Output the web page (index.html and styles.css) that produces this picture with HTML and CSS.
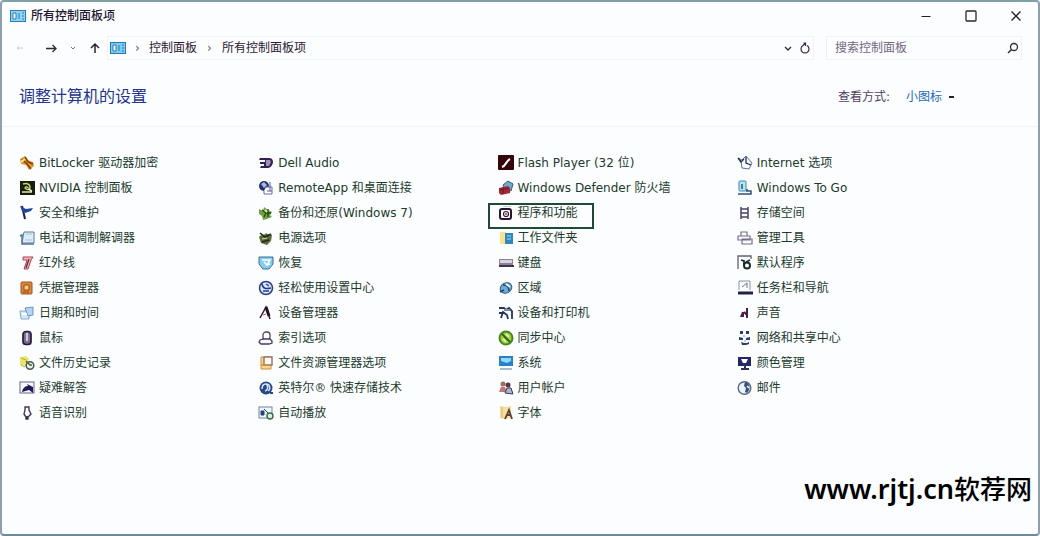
FILE: index.html
```html
<!DOCTYPE html>
<html lang="zh-CN">
<head>
<meta charset="UTF-8">
<meta name="viewport" content="width=device-width, initial-scale=1.0">
<title>所有控制面板项</title>
<link rel="stylesheet" href="styles.css">
</head>
<body>
    <div class="window">
        <header class="titlebar">
            <svg class="icon" viewBox="0 0 16 16"><rect x=".5" y="2.5" width="15" height="11" fill="#8fd4f7" stroke="#287fb5"/><path d="M3 5h3v6H3zM9 5v6M12 5h2M12 8h2M12 11h2" fill="#fff" stroke="#2c78ad"/></svg>
            <h1>所有控制面板项</h1>
            <div class="window-buttons">
                <button aria-label="最小化"><svg class="small" viewBox="0 0 12 12"><path d="M1.500 6.500h9" stroke="#222"/></svg></button>
                <button aria-label="最大化"><svg class="small" viewBox="0 0 12 12"><rect x="1" y="1" width="10" height="10" rx="1" fill="none" stroke="#2a2530" stroke-width="1.300"/></svg></button>
                <button aria-label="关闭"><svg class="small" viewBox="0 0 12 12"><path d="M1.500 1.500l9 9M10.500 1.500l-9 9" stroke="#222" stroke-width="1.300"/></svg></button>
            </div>
        </header>

        <div class="toolbar">
            <nav class="nav-buttons">
                <button aria-label="后退" disabled><svg class="small" viewBox="0 0 12 12"><path d="M9 6H3M5 4L3 6l2 2" fill="none" stroke="#c9cdd2"/></svg></button>
                <button aria-label="前进"><svg class="small" viewBox="0 0 12 12"><path d="M1 6.500h10M7.500 3L11 6.500 7.500 10" fill="none" stroke="#2b2b33" stroke-width="1.300"/></svg></button>
                <button class="recent" aria-label="最近位置"><svg class="small" viewBox="0 0 12 12"><path d="M4 5l2 2 2-2" fill="none" stroke="#777"/></svg></button>
                <button aria-label="向上"><svg class="small" viewBox="0 0 12 12"><path d="M6 11V2M2 6l4-4 4 4" fill="none" stroke="#2b2038" stroke-width="1.500"/></svg></button>
            </nav>
            <div class="address">
                <svg class="icon" viewBox="0 0 16 16"><rect x=".5" y="2.500" width="15" height="11" fill="#7ccbf5" stroke="#247bb2"/><path d="M3 5h3v6H3zM9 5v6M12 5h2M12 8h2M12 11h2" fill="#fff" stroke="#2c78ad"/></svg>
                <span class="sep">›</span>
                <a href="#">控制面板</a>
                <span class="sep wide">›</span>
                <a href="#">所有控制面板项</a>
                <div class="address-end">
                    <button aria-label="以前的位置"><svg class="small" viewBox="0 0 12 12"><path d="M3 5l3 3 3-3" fill="none" stroke="#332b3b" stroke-width="1.400"/></svg></button>
                    <button aria-label="刷新"><svg class="small" viewBox="0 0 12 12"><path d="M8 3.500a4 4 0 1 1-4 0L6 1.500M4.500 1h2v3" fill="none" stroke="#3b2848" stroke-width="1.200"/></svg></button>
                </div>
            </div>
            <div class="search">
                <input type="text" placeholder="搜索控制面板" aria-label="搜索控制面板">
                <svg class="small" viewBox="0 0 12 12"><circle cx="7" cy="5" r="3.500" fill="none" stroke="#33273d" stroke-width="1.300"/><path d="M4.500 7.500L1 11" stroke="#33273d" stroke-width="1.500"/></svg>
            </div>
        </div>

        <main>
            <div class="heading">
                <h2>调整计算机的设置</h2>
                <div class="view">
                    <label for="view">查看方式:</label>
                    <select id="view"><option>小图标</option><option>大图标</option><option>类别</option></select>
                </div>
            </div>

            <ul class="items">
                <li><a href="#"><svg class="icon" viewBox="0 0 16 16"><path d="M1 4l5-3 3 4 5 2 1 4-5 4-3-5-5-1z" fill="#d89a2b"/><path d="M3 4l5 5 4 5M6 2l3 5 5 2" fill="none" stroke="#8b3c17" stroke-width="1.500"/><path d="M2 7l4-3" stroke="#ffe784" stroke-width="2"/></svg>BitLocker 驱动器加密</a></li>
                <li><a href="#"><svg class="icon" viewBox="0 0 16 16"><path d="M2 3h9c3 0 4 2 4 4s-2 6-5 6H2l1-2h3V9H2V7h5V5H1z" fill="#352052"/><path d="M8 5h4l1 2-2 4H8z" fill="#9a92b4"/></svg>Dell Audio</a></li>
                <li><a href="#"><svg class="icon" viewBox="0 0 16 16"><rect width="16" height="15" rx="1" fill="#35050b"/><path d="M4 12c4-1 4-6 8-8" fill="none" stroke="#fff" stroke-width="2"/></svg>Flash Player (32 位)</a></li>
                <li><a href="#"><svg class="icon" viewBox="0 0 16 16"><path d="M1 3l4 2 4-4 6 7-3 6-7-1-1-7z" fill="#f5faff" stroke="#5d7295"/><path d="M1 3l3 4 3-3M9 2v6l5 2" fill="none" stroke="#252a56" stroke-width="1.300"/></svg>Internet 选项</a></li>

                <li><a href="#"><svg class="icon" viewBox="0 0 16 16"><rect x="1" y="1" width="15" height="14" fill="#181d12"/><path d="M4 4c4-1 7 0 7 3s-3 3-5 1c1-2 3-1 3 0" fill="none" stroke="#c6d36a" stroke-width="1.500"/><path d="M3 12h10M9 9l4 2" stroke="#dfe6ba" stroke-width="1.500"/></svg>NVIDIA 控制面板</a></li>
                <li><a href="#"><svg class="icon" viewBox="0 0 16 16"><circle cx="6" cy="6" r="5" fill="#26306f"/><path d="M3 4l3-2 3 3-3 3z" fill="#a9bce0"/><path d="M8 7h6v7H6v-3" fill="#fff" stroke="#706ba5"/><path d="M12 2v9M9 11h5" stroke="#5b5898"/></svg>RemoteApp 和桌面连接</a></li>
                <li><a href="#"><svg class="icon" viewBox="0 0 16 16"><path d="M5 5l5-4 5 3-2 7-6-2z" fill="#70a9c7" stroke="#3d5675"/><path d="M1 8l9-2 2 2v5l-9 2-2-2z" fill="#a52735"/><path d="M2 10l9-2M5 7v7" stroke="#5c1e36"/></svg>Windows Defender 防火墙</a></li>
                <li><a href="#"><svg class="icon" viewBox="0 0 16 16"><rect x="2" y="1" width="7" height="10" rx="1" fill="#b8e5f7" stroke="#3987ad"/><path d="M1 14h13v-3H9M5 4v5M10 11V9" fill="none" stroke="#30527a" stroke-width="1.500"/></svg>Windows To Go</a></li>

                <li><a href="#"><svg class="icon" viewBox="0 0 16 16"><path d="M3 1l3 13" stroke="#161e5b" stroke-width="2"/><path d="M1 1l6 3 7-1-2 3-6 2-3-2z" fill="#26469d"/></svg>安全和维护</a></li>
                <li><a href="#"><svg class="icon" viewBox="0 0 16 16"><path d="M1 4l4 2 1-4 4 3 4 2-2 3 2 2-5 2-4 1-1-4-3-2z" fill="#6da047"/><path d="M4 5l4 3-2 4M10 4v8M8 8h5" fill="none" stroke="#234519" stroke-width="1.300"/><path d="M7 5l2 2" stroke="#e1ee8b" stroke-width="2"/></svg>备份和还原(Windows 7)</a></li>
                <li class="marked"><a href="#"><svg class="icon" viewBox="0 0 16 16"><rect x="2" y="4" width="11" height="10" rx="2" fill="#fff" stroke="#29152f" stroke-width="2"/><circle cx="8" cy="9" r="2.500" fill="#fff" stroke="#2e1833" stroke-width="1.200"/><circle cx="8" cy="9" r="1" fill="#a63252"/><path d="M5 1.500h8" stroke="#d4c6d4"/></svg>程序和功能</a></li>
                <li><a href="#"><svg class="icon" viewBox="0 0 16 16"><path d="M4 2v12M11 2v12M4 4h7M4 8h7M4 12h7" fill="none" stroke="#4e4369" stroke-width="1.500"/></svg>存储空间</a></li>

                <li><a href="#"><svg class="icon" viewBox="0 0 16 16"><path d="M5 2h10v11H3z" fill="#d9edf8" stroke="#5b7d9b"/><path d="M1 6l2-1v9h12" fill="none" stroke="#596f96" stroke-width="1.500"/><path d="M7 4h6M6 10h7" stroke="#a9c3d9"/></svg>电话和调制解调器</a></li>
                <li><a href="#"><svg class="icon" viewBox="0 0 16 16"><path d="M1 7c2-3 5-1 7-4 2 2 4 1 6 2l-1 6-4 4-6-2z" fill="#596b3c"/><path d="M2 3l5 4 6-3M4 12l7-2" fill="none" stroke="#1f2916" stroke-width="1.600"/><path d="M4 9l5-1" stroke="#d3d9a3"/></svg>电源选项</a></li>
                <li><a href="#"><svg class="icon" viewBox="0 0 16 16"><path d="M2 2h6v12H2z" fill="#f9e290"/><rect x="7" y="3" width="8" height="11" fill="#3187be"/><path d="M9 6h4M9 9h4" stroke="#a9daf4"/></svg>工作文件夹</a></li>
                <li><a href="#"><svg class="icon" viewBox="0 0 16 16"><path d="M4 6V2h6v4M1 6h12v4H1zM5 9h10v5H5z" fill="#fafbff" stroke="#776f8a" stroke-width="1.200"/></svg>管理工具</a></li>

                <li><a href="#"><svg class="icon" viewBox="0 0 16 16"><path d="M4 2h10l-2 3-3 9H5l3-9H4z" fill="#f2b9bb" stroke="#a8414f"/><path d="M10 4L7 13" stroke="#622637" stroke-width="1.300"/></svg>红外线</a></li>
                <li><a href="#"><svg class="icon" viewBox="0 0 16 16"><path d="M1 2h14v7l-4 5H5L1 9z" fill="#85cdf0" stroke="#3c6c91"/><path d="M4 5h8l-3 5-3-3M9 10l3-1" fill="none" stroke="#fff" stroke-width="1.500"/></svg>恢复</a></li>
                <li><a href="#"><svg class="icon" viewBox="0 0 16 16"><path d="M1 4h14v8H1z" fill="#8a819b"/><path d="M2 5h12v3H2z" fill="#d8d3df"/><path d="M1 11h15" stroke="#413450" stroke-width="2"/></svg>键盘</a></li>
                <li><a href="#"><svg class="icon" viewBox="0 0 16 16"><path d="M1 14V1h13v3" fill="none" stroke="#5c6374" stroke-width="1.300"/><path d="M4 5l3 1v5" fill="none" stroke="#192d28" stroke-width="1.800"/><circle cx="10" cy="10.500" r="3" fill="#fff" stroke="#192d28" stroke-width="2"/><path d="M9 7l4-2" stroke="#192d28" stroke-width="1.500"/></svg>默认程序</a></li>

                <li><a href="#"><svg class="icon" viewBox="0 0 16 16"><rect x="2" y="2" width="11" height="12" rx="1" fill="#dc8439" stroke="#a6531f"/><path d="M5 5h5v5H5zM4 12h6" fill="#f9c987" stroke="#914c22"/></svg>凭据管理器</a></li>
                <li><a href="#"><svg class="icon" viewBox="0 0 16 16"><circle cx="8" cy="8" r="6.500" fill="#dce8fb" stroke="#263c86" stroke-width="1.500"/><path d="M4 4c1 5 4 5 9 4M5 11h6M8 4l3 2" fill="none" stroke="#263c86" stroke-width="1.500"/></svg>轻松使用设置中心</a></li>
                <li><a href="#"><svg class="icon" viewBox="0 0 16 16"><ellipse cx="8" cy="8" rx="6" ry="5" fill="#6dacd7" stroke="#31597c" transform="rotate(-30 8 8)"/><path d="M5 5c4 0 6 2 6 6M2 12l4-2" fill="none" stroke="#204372" stroke-width="1.500"/><path d="M8 4l4 3" stroke="#e4f7ff" stroke-width="2"/></svg>区域</a></li>
                <li><a href="#"><svg class="icon" viewBox="0 0 16 16"><path d="M2 10V1h11v9" fill="#fafcff" stroke="#8e8fa4"/><path d="M5 7l5-4v5" fill="none" stroke="#6c718c"/><path d="M1 13h15" stroke="#202440" stroke-width="3"/></svg>任务栏和导航</a></li>

                <li><a href="#"><svg class="icon" viewBox="0 0 16 16"><path d="M1 6h9v8H2z" fill="#d5e9fa" stroke="#88abcc"/><path d="M6 3l8-1v8l-5 1z" fill="#b4d6f3" stroke="#7194bb"/><path d="M3 9h5" stroke="#fff" stroke-width="2"/></svg>日期和时间</a></li>
                <li><a href="#"><svg class="icon" viewBox="0 0 16 16"><path d="M2 13L8 2l4 12" fill="none" stroke="#3c1433" stroke-width="1.500"/><path d="M8 2l3 9" stroke="#261026" stroke-width="3"/><path d="M5 10l3-1" stroke="#b76683"/></svg>设备管理器</a></li>
                <li><a href="#"><svg class="icon" viewBox="0 0 16 16"><path d="M1 3h5l2 2 3-2 3 3v8M3 13l2-6 4 3 1 4M1 8h3" fill="none" stroke="#27345a" stroke-width="1.800"/><path d="M6 5h6" stroke="#7b90b1" stroke-width="2"/></svg>设备和打印机</a></li>
                <li><a href="#"><svg class="icon" viewBox="0 0 16 16"><path d="M4 12l2-5v5M10 3v10M10 10l-3-3" fill="none" stroke="#4c1b48" stroke-width="2"/></svg>声音</a></li>

                <li><a href="#"><svg class="icon" viewBox="0 0 16 16"><rect x="4" y="1.500" width="8" height="13" rx="3" fill="#7b6d91" stroke="#271c3d" stroke-width="1.700"/><path d="M8 3v8" stroke="#eee" stroke-width="1.500"/></svg>鼠标</a></li>
                <li><a href="#"><svg class="icon" viewBox="0 0 16 16"><rect x="5" y="2" width="7" height="8" rx="3" fill="#fff" stroke="#514661" stroke-width="1.300"/><path d="M2 10l3-1h7l2 2v2l-3 1H3l-2-2z" fill="#f8f7fb" stroke="#483a59" stroke-width="1.300"/></svg>索引选项</a></li>
                <li><a href="#"><svg class="icon" viewBox="0 0 16 16"><circle cx="8" cy="8" r="6.500" fill="#9cd343" stroke="#4a851b" stroke-width="2"/><path d="M4 4l8 8" stroke="#365e12" stroke-width="1.800"/><path d="M8 4l3 3M5 9l3 3" stroke="#f2ffcf" stroke-width="1.500"/></svg>同步中心</a></li>
                <li><a href="#"><svg class="icon" viewBox="0 0 16 16"><path d="M3 1h3v3H3zM9 1h3v3H9zM2 7l4 1v2H2zM9 8l4-1v3H9zM4 12l3 1h3l2-1v2l-3 1H5z" fill="#263e70"/><path d="M7 5v2M8 10v2" stroke="#79a3c6"/></svg>网络和共享中心</a></li>

                <li><a href="#"><svg class="icon" viewBox="0 0 16 16"><path d="M1 2l6-1 3 3-3 7-6-1z" fill="#ece56d"/><path d="M2 3l5 2M2 10l4 2" stroke="#b3ad3d"/><circle cx="11" cy="10.500" r="3.800" fill="#e7efe9" stroke="#475947" stroke-width="1.500"/><path d="M7 6l4 4h2" fill="none" stroke="#475947" stroke-width="1.300"/></svg>文件历史记录</a></li>
                <li><a href="#"><svg class="icon" viewBox="0 0 16 16"><path d="M3 14V2h10v12z" fill="#f8d78e" stroke="#d28e34"/><rect x="6" y="2" width="8" height="8" fill="#fffaf0" stroke="#8d6562" stroke-width="1.300"/><path d="M3 10h7" stroke="#d28e34" stroke-width="1.500"/></svg>文件资源管理器选项</a></li>
                <li><a href="#"><svg class="icon" viewBox="0 0 16 16"><rect x="1" y="1" width="14" height="10" fill="#2583c9"/><path d="M3 3h10v3l-4 2-6-2z" fill="#99d6fa"/><path d="M2 14h12" stroke="#91a5b9" stroke-width="1.500"/></svg>系统</a></li>
                <li><a href="#"><svg class="icon" viewBox="0 0 16 16"><path d="M1 2h13v9H1z" fill="#24246a"/><path d="M4 4h7l-2 4H6z" fill="#fff"/><path d="M8 8v5M4 14h8" stroke="#33305e" stroke-width="2"/></svg>颜色管理</a></li>

                <li><a href="#"><svg class="icon" viewBox="0 0 16 16"><rect x="1" y="2" width="14" height="11" fill="#f7f8ff" stroke="#666486"/><path d="M3 12c1-5 4-6 6-6l-1-2 6 3v6l-4-3z" fill="#211c55"/></svg>疑难解答</a></li>
                <li><a href="#"><svg class="icon" viewBox="0 0 16 16"><circle cx="8" cy="8" r="6.500" fill="#274783"/><path d="M4 9c0-5 4-6 5-4s1 5-2 6M8 4c4 0 5 5 2 7" fill="none" stroke="#d4e4fa" stroke-width="1.500"/><path d="M12 12h3v2h-3z" fill="#274783"/></svg>英特尔® 快速存储技术</a></li>
                <li><a href="#"><svg class="icon" viewBox="0 0 16 16"><circle cx="5" cy="4" r="2.500" fill="#9d6d5e"/><circle cx="10" cy="5" r="2.500" fill="#503740"/><path d="M1 12l2-5h4l2 5z" fill="#c27871"/><path d="M7 13l2-5h4l2 6z" fill="#aab6d6" stroke="#433654"/></svg>用户帐户</a></li>
                <li><a href="#"><svg class="icon" viewBox="0 0 16 16"><circle cx="7.500" cy="8" r="6.300" fill="#edf3fb" stroke="#566889" stroke-width="1.400"/><path d="M8 2c5 1 6 7 2 11l-2-1 1-4-2-2z" fill="#35517e"/><path d="M10 6l2 2" stroke="#fff" stroke-width="1.500"/></svg>邮件</a></li>

                <li><a href="#"><svg class="icon" viewBox="0 0 16 16"><path d="M6 2h4v3l2 4-3 3v2H7v-2L5 9l1-4z" fill="#fff" stroke="#433858" stroke-width="1.400"/><path d="M8 11v3" stroke="#241b36" stroke-width="1.500"/></svg>语音识别</a></li>
                <li><a href="#"><svg class="icon" viewBox="0 0 16 16"><rect x="1" y="2" width="13" height="11" fill="#edf6fa" stroke="#728896"/><path d="M3 6h3v4H3zM6 4l4 4" fill="#26407c" stroke="#26407c"/><circle cx="12" cy="11" r="3" fill="#d3efd8" stroke="#386b4b" stroke-width="1.400"/></svg>自动播放</a></li>
                <li><a href="#"><svg class="icon" viewBox="0 0 16 16"><path d="M2 1l5 1 6-1v12l-6 1-5-1z" fill="#f6dda0"/><path d="M4 2v11" stroke="#ddb460"/><path d="M7 14l4-9 3 9M9 10h4" fill="none" stroke="#59422e" stroke-width="1.800"/></svg>字体</a></li>
            </ul>
        </main>
        <div class="watermark"><span class="domain">www.rjtj.cn</span>软荐网</div>
    </div>
</body>
</html>
```

FILE: styles.css
```css
*,
*::before {
    box-sizing: border-box;
}
body {
    margin: 0;
    font-family: "DejaVu Sans", "Noto Sans CJK SC", sans-serif;
    font-size: 12px;
    line-height: 16px;
    color: #24152f;
}
button,
input,
select {
    font: inherit;
    color: inherit;
    background: none;
    border: none;
    padding: 0;
    margin: 0;
}
a {
    color: inherit;
    text-decoration: none;
}
.icon {
    width: 16px;
    height: 16px;
    flex: none;
}
.small {
    width: 12px;
    height: 12px;
    display: block;
    flex: none;
}
.window {
    position: relative;
    min-height: 100vh;
    background-color: #fbfdff;
    border: 2px solid #8e9fae;
    border-top-color: #7fa0a5;
    border-bottom-color: #6e8c98;
    border-radius: 4px;
}

/* title bar */
.titlebar {
    display: flex;
    align-items: center;
    gap: 5px;
    height: 28px;
    padding: 0 16px 0 8px;
}
.titlebar h1 {
    margin: 0;
    font-size: 12px;
    font-weight: 500;
}
.window-buttons {
    display: flex;
    gap: 33px;
    margin-left: auto;
}

/* navigation row */
.toolbar {
    display: flex;
    align-items: center;
    margin-top: 6px;
    padding: 0 16px 0 12px;
}
.nav-buttons {
    display: flex;
    align-items: center;
    gap: 11px;
    width: 93px;
}
.nav-buttons button:nth-child(2) {
    margin-left: 8px;
}
.nav-buttons .recent {
    margin: 0 -1px;
}
.address,
.search {
    display: flex;
    align-items: center;
    height: 24px;
    border: 1px solid #f0f2f7;
}
.address {
    flex: 1;
    padding: 0 2px;
    color: #2c1831;
}
.sep {
    width: 23px;
    text-align: center;
    color: #665c70;
}
.sep.wide {
    width: 25px;
}
.address-end {
    display: flex;
    gap: 5px;
    margin-left: auto;
}
.search {
    width: 196px;
    margin-left: 12px;
    padding: 0 2px 0 8px;
}
.search input {
    flex: 1;
    min-width: 0;
    outline: none;
}
.search input::placeholder {
    color: #75677f;
    opacity: 1;
}

/* heading */
.heading {
    display: flex;
    align-items: center;
    justify-content: space-between;
    height: 67px;
    padding: 8px 84px 0 17px;
    border-bottom: 1px solid #f0f3f8;
}
.heading h2 {
    margin: 0;
    font-size: 16px;
    line-height: 24px;
    font-weight: 400;
    color: #24338c;
}
.view {
    display: flex;
    align-items: center;
    gap: 16px;
    color: #51405f;
}
.view select {
    appearance: none;
    width: 48px;
    color: #2569b8;
    background: linear-gradient(#222, #222) no-repeat right center / 5px 2px;
}

/* item list */
.items {
    display: grid;
    grid-template-columns: repeat(4, 1fr);
    grid-auto-rows: 25px;
    margin: 0;
    padding: 23px 62px 24px 17px;
    list-style: none;
    color: #1c3a2c;
}
.items li {
    position: relative;
    display: flex;
    align-items: center;
}
.items a {
    display: flex;
    align-items: center;
    gap: 4px;
    white-space: nowrap;
}
.marked::before {
    content: "";
    position: absolute;
    left: -10px;
    top: 3px;
    width: 106px;
    height: 26px;
    border: 2px solid #214a35;
    pointer-events: none;
}

.watermark {
    position: absolute;
    right: 6px;
    bottom: 27px;
    font-family: "Noto Sans", "Noto Sans CJK SC", sans-serif;
    font-size: 26px;
    line-height: 36px;
    font-weight: 500;
    color: #000;
}
.domain {
    font-size: 27px;
    font-weight: 600;
}
```
